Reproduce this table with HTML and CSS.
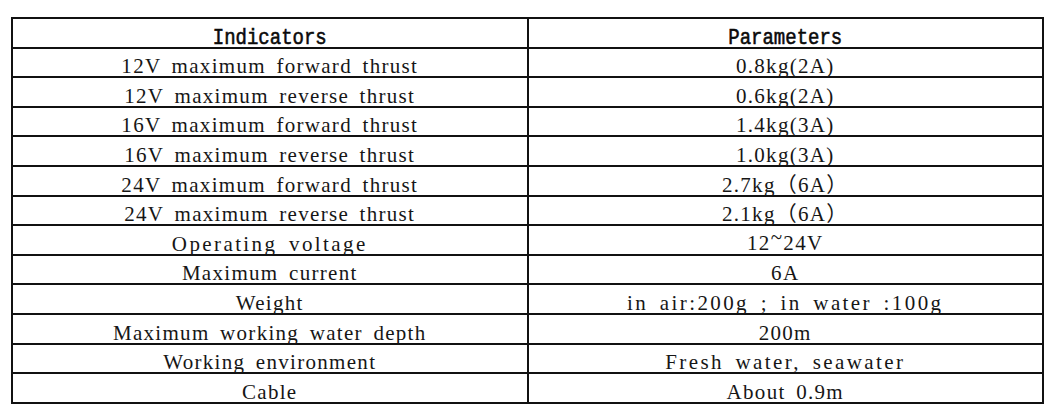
FILE: index.html
```html
<!DOCTYPE html>
<html lang="en">
<head>
<meta charset="utf-8">
<title>Thruster parameters</title>
<link rel="stylesheet" href="styles.css">
</head>
<body>
<table class="spec">
  <colgroup><col class="col-half"><col class="col-half"></colgroup>
  <thead>
    <tr><th><span class="head-text">Indicators</span></th><th><span class="head-text">Parameters</span></th></tr>
  </thead>
  <tbody>
    <tr><td>12V maximum forward thrust</td><td>0.8kg(2A)</td></tr>
    <tr><td>12V maximum reverse thrust</td><td>0.6kg(2A)</td></tr>
    <tr><td>16V maximum forward thrust</td><td>1.4kg(3A)</td></tr>
    <tr><td>16V maximum reverse thrust</td><td>1.0kg(3A)</td></tr>
    <tr><td>24V maximum forward thrust</td><td>2.7kg（6A）</td></tr>
    <tr><td>24V maximum reverse thrust</td><td>2.1kg（6A）</td></tr>
    <tr><td class="wide">Operating voltage</td><td>12<span class="tilde">~</span>24V</td></tr>
    <tr><td>Maximum current</td><td>6A</td></tr>
    <tr><td>Weight</td><td class="wide">in air:200g ; in water :100g</td></tr>
    <tr><td>Maximum working water depth</td><td>200m</td></tr>
    <tr><td>Working environment</td><td class="wide">Fresh water, seawater</td></tr>
    <tr><td>Cable</td><td>About 0.9m</td></tr>
  </tbody>
</table>
</body>
</html>
```
FILE: styles.css
```css
html, body {
  margin: 0;
  padding: 0;
  background: #ffffff;
}

.spec {
  margin: 17px 0 0 11px;
  width: 1033px;
  table-layout: fixed;
  border-collapse: collapse;
  border: 2px solid #111;
  color: #161616;
}

.col-half {
  width: 50%;
}

.spec th,
.spec td {
  border: 2px solid #111;
  padding: 0;
  height: 27.6px;
  text-align: center;
  vertical-align: bottom;
  white-space: nowrap;
}

.spec th {
  font-family: "Liberation Mono", "DejaVu Sans Mono", monospace;
  font-size: 19px;
  font-weight: 400;
  line-height: 16px;
  color: #0a0a0a;
}

.head-text {
  display: inline-block;
  transform: scaleY(1.2);
  transform-origin: 50% 80%;
  -webkit-text-stroke: 0.5px #0a0a0a;
}

.spec td {
  font-family: "Liberation Serif", "Noto Sans CJK SC", serif;
  font-size: 21px;
  line-height: 20px;
  letter-spacing: 1.3px;
  word-spacing: 4px;
}

.spec td.wide {
  letter-spacing: 2.4px;
}

.tilde {
  vertical-align: 0.3em;
}
```
